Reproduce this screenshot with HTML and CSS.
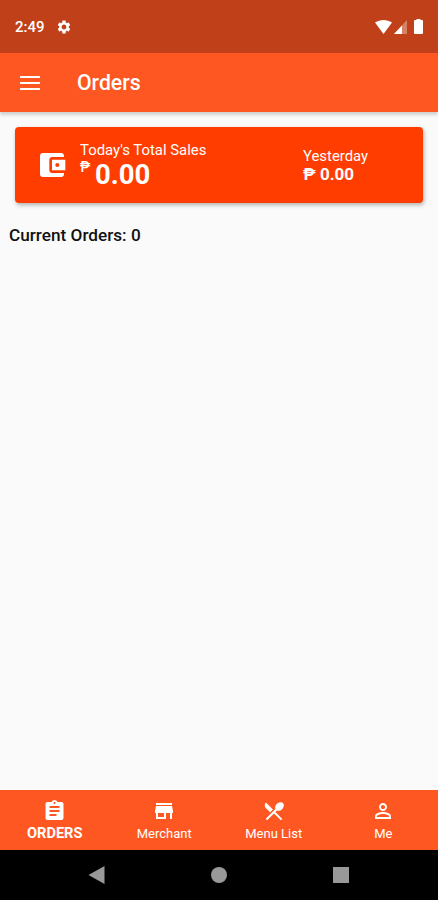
FILE: index.html
```
<!DOCTYPE html>
<html lang="en">
<head>
    <meta charset="UTF-8">
    <meta name="viewport" content="width=device-width, initial-scale=1.0">
    <title>Orders</title>
    <link rel="stylesheet" href="styles.css">
</head>
<body>
    <div class="status-bar">
        <span class="time">2:49</span>
        <svg class="gear" viewBox="0 0 24 24"><path d="M19.14 12.94c.04-.3.06-.61.06-.94 0-.32-.02-.64-.07-.94l2.03-1.58c.18-.14.23-.41.12-.61l-1.92-3.32c-.12-.22-.37-.29-.59-.22l-2.39.96c-.5-.38-1.03-.7-1.62-.94l-.36-2.54c-.04-.24-.24-.41-.48-.41h-3.84c-.24 0-.43.17-.47.41l-.36 2.54c-.59.24-1.13.57-1.62.94l-2.39-.96c-.22-.08-.47 0-.59.22L2.74 8.87c-.12.21-.08.47.12.61l2.03 1.58c-.05.3-.09.63-.09.94s.02.64.07.94l-2.03 1.58c-.18.14-.23.41-.12.61l1.92 3.32c.12.22.37.29.59.22l2.39-.96c.5.38 1.03.7 1.62.94l.36 2.54c.05.24.24.41.48.41h3.84c.24 0 .44-.17.47-.41l.36-2.54c.59-.24 1.13-.56 1.62-.94l2.39.96c.22.08.47 0 .59-.22l1.92-3.32c.12-.22.07-.47-.12-.61l-2.01-1.58zM12 15.6c-1.98 0-3.6-1.62-3.6-3.6s1.62-3.6 3.6-3.6 3.6 1.62 3.6 3.6-1.62 3.6-3.6 3.6z"/></svg>
        <svg class="wifi" viewBox="0 0 17 14"><path d="M0 2.6C5 -.8 12 -.8 17 2.6L8.5 14z"/></svg>
        <svg class="signal" viewBox="0 0 13 14"><path d="M13 0v14H0z" opacity=".35"/><path d="M8 5.4V14H0z"/></svg>
        <svg class="battery" viewBox="0 0 9 15"><path d="M3 0h3l1 1h1a1 1 0 0 1 1 1v12a1 1 0 0 1-1 1H1a1 1 0 0 1-1-1V2a1 1 0 0 1 1-1h1z"/></svg>
    </div>

    <header class="app-bar">
        <svg class="menu" viewBox="0 0 20 14"><path d="M0 0h20v2H0zM0 6h20v2H0zM0 12h20v2H0z"/></svg>
        <h1>Orders</h1>
    </header>

    <main class="content">
        <section class="sales-card">
            <svg class="wallet" viewBox="0 0 24 24"><path d="M21 18v1c0 1.100-.9 2-2 2H5c-1.110 0-2-.9-2-2V5c0-1.100.89-2 2-2h14c1.100 0 2 .9 2 2v1h-9c-1.110 0-2 .9-2 2v8c0 1.100.89 2 2 2h9zm-9-2h10V8H12v8zm4-2.500c-.83 0-1.500-.67-1.500-1.500s.67-1.500 1.500-1.500 1.500.67 1.500 1.500-.67 1.500-1.500 1.500z"/></svg>
            <div class="today">
                <div class="label">Today's Total Sales</div>
                <div class="total"><span class="peso">₱</span><span class="amount">0.00</span></div>
            </div>
            <div class="yesterday">
                <div class="label">Yesterday</div>
                <div class="value">₱ 0.00</div>
            </div>
        </section>
        <h2>Current Orders: 0</h2>
    </main>

    <nav class="tabs">
        <a class="tab active">
            <svg viewBox="0 0 24 24"><path d="M19 3h-4.180C14.400 1.840 13.300 1 12 1c-1.300 0-2.400.84-2.820 2H5c-1.100 0-2 .9-2 2v14c0 1.100.9 2 2 2h14c1.100 0 2-.9 2-2V5c0-1.100-.9-2-2-2zm-7 0c.55 0 1 .45 1 1s-.45 1-1 1-1-.45-1-1 .45-1 1-1zm2 14H7v-2h7v2zm3-4H7v-2h10v2zm0-4H7V7h10v2z"/></svg>
            <span>ORDERS</span>
        </a>
        <a class="tab">
            <svg viewBox="0 0 24 24"><path d="M20 4H4v2h16V4zm1 10v-2l-1-5H4l-1 5v2h1v6h10v-6h4v6h2v-6h1zm-9 4H6v-4h6v4z"/></svg>
            <span>Merchant</span>
        </a>
        <a class="tab">
            <svg viewBox="0 0 24 24"><path d="M8.100 13.340l2.830-2.830L3.910 3.500c-1.560 1.560-1.560 4.090 0 5.660l4.190 4.180zm6.780-1.810c1.530.71 3.680.21 5.270-1.380 1.910-1.910 2.280-4.650.81-6.120-1.460-1.460-4.200-1.100-6.120.81-1.590 1.590-2.090 3.740-1.380 5.270L3.700 19.870l1.410 1.410L12 14.410l6.880 6.880 1.410-1.410L13.410 13l1.470-1.470z"/></svg>
            <span>Menu List</span>
        </a>
        <a class="tab">
            <svg viewBox="0 0 24 24"><path d="M12 5.900c1.160 0 2.100.94 2.100 2.100s-.94 2.100-2.100 2.100S9.900 9.160 9.900 8s.94-2.100 2.100-2.100m0 9c2.970 0 6.100 1.460 6.100 2.100v1.100H5.900V17c0-.64 3.130-2.100 6.100-2.100M12 4C9.790 4 8 5.790 8 8s1.790 4 4 4 4-1.790 4-4-1.790-4-4-4zm0 9c-2.670 0-8 1.340-8 4v3h16v-3c0-2.660-5.330-4-8-4z"/></svg>
            <span>Me</span>
        </a>
    </nav>

    <div class="system-nav">
        <svg viewBox="0 0 18 18"><path d="M16.500 0v18L.5 9z"/></svg>
        <svg viewBox="0 0 18 18"><circle cx="9" cy="9" r="8"/></svg>
        <svg viewBox="0 0 18 18"><path d="M1 1h16v16H1z"/></svg>
    </div>
</body>
</html>
```
FILE: styles.css
```
* {
    box-sizing: border-box;
}

body {
    margin: 0;
    height: 900px;
    display: flex;
    flex-direction: column;
    font-family: Roboto, sans-serif;
    background-color: #fafafa;
    color: #111;
    overflow: hidden;
}

svg {
    display: block;
    flex: none;
    fill: #fff;
}

.status-bar {
    height: 52.5px;
    padding: 1px 15px 0 15px;
    display: flex;
    align-items: center;
    background-color: #bf4019;
    color: #fff;
}

.time {
    width: 41px;
    padding-top: 1px;
    font-size: 15px;
    font-weight: 500;
}

.gear {
    width: 16px;
    height: 16px;
}

.wifi {
    width: 17px;
    height: 14px;
    margin-left: auto;
}

.signal {
    width: 13px;
    height: 14px;
    margin-left: 2px;
}

.battery {
    width: 9px;
    height: 15px;
    margin-left: 7px;
}

.app-bar {
    height: 59.5px;
    padding: 1px 20px 0;
    display: flex;
    align-items: center;
    background-color: #ff5722;
    color: #fff;
    box-shadow: 0 3px 3px rgba(0, 0, 0, 0.16);
}

.menu {
    width: 20px;
    height: 14px;
}

h1 {
    margin: 0 0 0 37px;
    font-size: 21.2px;
    font-weight: 500;
}

.content {
    flex: 1;
    padding: 15px 15px 0;
}

.sales-card {
    height: 76px;
    padding-left: 21px;
    display: flex;
    align-items: center;
    background-color: #ff3d00;
    color: #fff;
    border-radius: 4px;
    box-shadow: 1px 2px 4px rgba(0, 0, 0, 0.3);
}

.wallet {
    width: 32px;
    height: 32px;
}

.today {
    width: 223px;
    margin-left: 12px;
}

.label {
    font-size: 14.9px;
    line-height: 18px;
}

.total {
    display: flex;
    height: 31px;
}

.peso {
    width: 15px;
    font-size: 14px;
    font-weight: 500;
    line-height: 16px;
}

.amount {
    font-size: 27.5px;
    font-weight: 700;
    line-height: 32px;
}

.value {
    font-size: 17px;
    font-weight: 700;
    line-height: 18px;
}

h2 {
    margin: 22px 0 0 -6px;
    font-size: 17.2px;
    font-weight: 500;
    line-height: 20px;
}

.tabs {
    height: 60px;
    display: flex;
    background-color: #ff5722;
    color: #fff;
}

.tab {
    flex: 1;
    padding-top: 9px;
    display: flex;
    flex-direction: column;
    align-items: center;
    font-size: 13px;
    line-height: 16px;
}

.tab svg {
    width: 24px;
    height: 24px;
    margin-bottom: 3px;
}

.tab.active {
    font-size: 14.6px;
    font-weight: 700;
}

.tab.active svg {
    width: 25px;
    margin-bottom: 2px;
}

.system-nav {
    height: 50px;
    padding: 0 88px;
    display: flex;
    align-items: center;
    justify-content: space-between;
    background-color: #000;
}

.system-nav svg {
    width: 18px;
    height: 18px;
    fill: #999;
}
```
